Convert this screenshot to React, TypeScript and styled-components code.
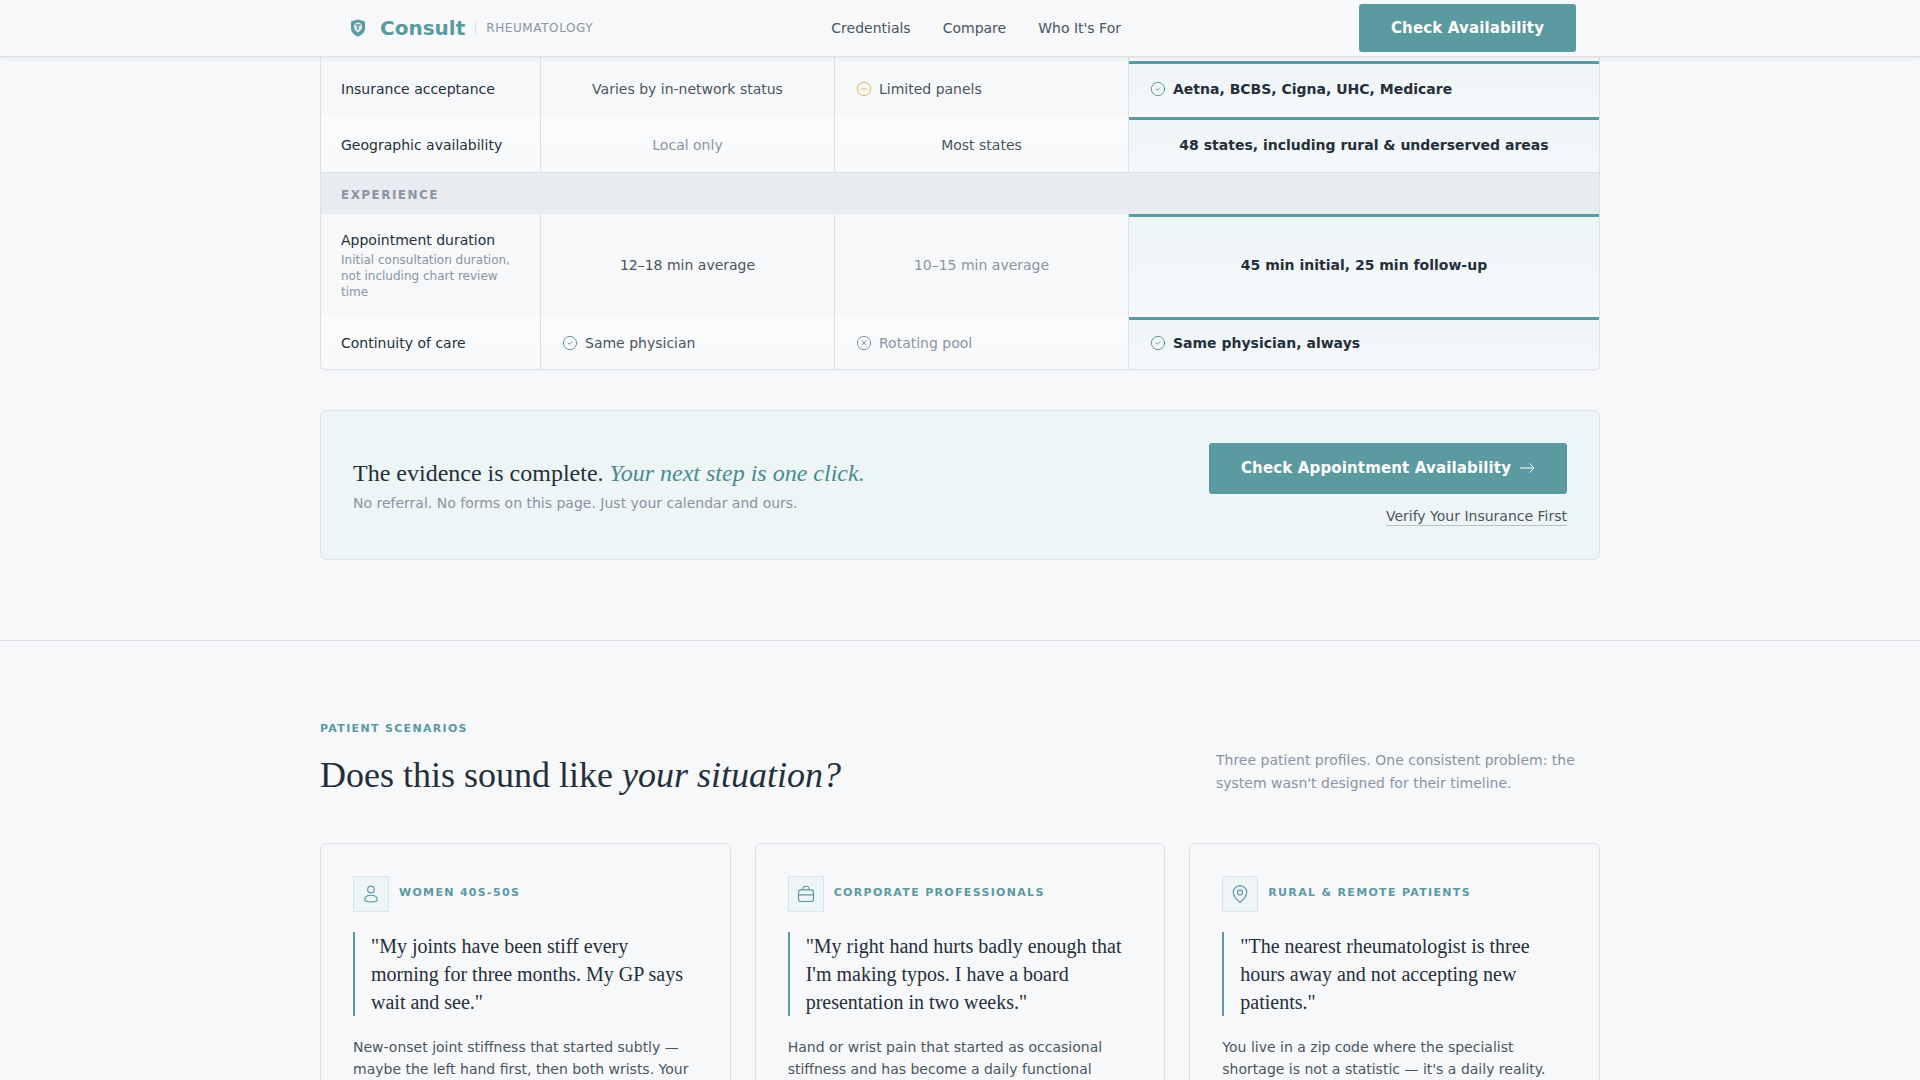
import * as React from 'react';
import styled, { createGlobalStyle } from 'styled-components';
import { CircleCheck, CircleMinus, CircleX, MapPin } from 'lucide-react';

const teal = '#5b9aa0';
const ink = '#252f3a';
const slate = '#4a5560';
const mute = '#8a94a3';
const line = '#dde1e6';
const page = '#f6f8fa';
const sans = '"DejaVu Sans", sans-serif';
const serif = '"Liberation Serif", serif';

const GlobalStyle = createGlobalStyle`
    html, body {
        margin: 0;
        height: 100%;
        overflow: hidden;
        background: ${page};
        font-family: ${sans};
        color: ${ink};
    }
`;

const Page = styled.div`
    height: 1080px;
    overflow: hidden;
`;

const Nav = styled.header`
    position: relative;
    z-index: 2;
    height: 56px;
    background: ${page};
    border-bottom: 1px solid ${line};
    box-shadow: 0 1px 4px rgba(31, 41, 51, 0.08);
`;

const NavInner = styled.div`
    width: 1280px;
    height: 56px;
    margin: 0 auto;
    padding: 0 24px;
    box-sizing: border-box;
    display: flex;
    align-items: center;
    justify-content: space-between;
`;

const Brand = styled.div`
    display: flex;
    align-items: center;
`;

const BrandName = styled.span`
    margin-left: 8px;
    font-size: 20px;
    font-weight: 700;
    color: ${teal};
`;

const BrandTag = styled.span`
    margin-left: 10px;
    padding-left: 10px;
    border-left: 1px solid ${line};
    font-size: 12px;
    line-height: 16px;
    letter-spacing: 0.6px;
    color: ${mute};
`;

const NavLinks = styled.nav`
    display: flex;
    gap: 32px;
    font-size: 14px;
    color: ${slate};
`;

const Button = styled.a<{ $wide?: boolean }>`
    display: flex;
    align-items: center;
    justify-content: center;
    gap: 8px;
    box-sizing: border-box;
    width: ${p => (p.$wide ? '358px' : '217px')};
    height: ${p => (p.$wide ? '51px' : '48px')};
    border-radius: 3px;
    background: ${teal};
    color: #ffffff;
    font-size: 15px;
    font-weight: 700;
    letter-spacing: 0.15px;
`;

const Container = styled.div`
    width: 1280px;
    margin: 0 auto;
`;

const Table = styled.div`
    border: 1px solid ${line};
    border-top: none;
    border-radius: 0 0 6px 6px;
    overflow: hidden;
    box-shadow: 0 1px 2px rgba(31, 41, 51, 0.04);
`;

const Row = styled.div<{ $h: number; $alt?: boolean; $rule?: boolean; $lift?: number }>`
    --lift: ${p => p.$lift ?? 0}px;
    display: grid;
    grid-template-columns: 220px 294px 294px 1fr;
    height: ${p => p.$h}px;
    box-sizing: border-box;
    background: ${p => (p.$alt ? 'linear-gradient(180deg, #fafbfc, #f7f9fa)' : page)};
    border-bottom: ${p => (p.$rule ? `1px solid ${line}` : 'none')};
`;

const Cell = styled.div<{ $tone?: 'mute' | 'slate'; $left?: boolean }>`
    display: flex;
    align-items: center;
    justify-content: ${p => (p.$left ? 'flex-start' : 'center')};
    gap: ${p => (p.$left ? '7px' : '8px')};
    padding: 0 20px var(--lift) ${p => (p.$left ? '21px' : '20px')};
    border-right: 1px solid ${line};
    font-size: 14px;
    color: ${p => (p.$tone === 'mute' ? mute : slate)};
`;

const LabelCell = styled(Cell)`
    flex-direction: column;
    align-items: flex-start;
    justify-content: center;
    gap: 0;
    padding-bottom: 0;
    color: ${ink};
`;

const LabelSub = styled.span`
    margin-top: 4px;
    font-size: 12px;
    line-height: 16px;
    color: ${mute};
`;

const Best = styled.div<{ $left?: boolean }>`
    display: flex;
    align-items: center;
    justify-content: ${p => (p.$left ? 'flex-start' : 'center')};
    gap: ${p => (p.$left ? '7px' : '8px')};
    padding: 0 20px calc(3px + var(--lift)) ${p => (p.$left ? '21px' : '20px')};
    border-top: 3px solid ${teal};
    background: linear-gradient(180deg, #edf5f6, ${page});
    font-size: 14px;
    font-weight: 700;
    color: ${ink};
`;

const SectionRow = styled.div`
    display: flex;
    align-items: center;
    height: 41px;
    padding: 2px 20px 0;
    box-sizing: border-box;
    background: #e8ebef;
    font-size: 12px;
    font-weight: 700;
    letter-spacing: 1.44px;
    color: ${mute};
`;

const Cta = styled.div`
    display: flex;
    align-items: center;
    justify-content: space-between;
    box-sizing: border-box;
    height: 150px;
    margin-top: 40px;
    padding: 0 32px;
    border: 1px solid #d7e6e8;
    border-radius: 6px;
    background: #edf5f6;
`;

const CtaTitle = styled.div`
    font-family: ${serif};
    font-size: 24px;
    line-height: 30px;
    color: ${ink};

    em {
        color: #4a8a90;
    }
`;

const CtaSub = styled.div`
    margin: 7px 0 1px;
    font-size: 14px;
    color: ${mute};
`;

const CtaActions = styled.div`
    display: flex;
    flex-direction: column;
    align-items: flex-end;
    gap: 14px;
    margin-bottom: 2px;
`;

const TextLink = styled.a`
    font-size: 14px;
    line-height: 17px;
    color: ${slate};
    border-bottom: 1px solid #b9c2cb;
`;

const Rule = styled.hr`
    margin: 80px 0 0;
    border: none;
    border-top: 1px solid ${line};
`;

const Head = styled.div`
    display: flex;
    align-items: flex-end;
    justify-content: space-between;
    padding-top: 81px;
`;

const Eyebrow = styled.div`
    font-size: 11px;
    line-height: 14px;
    font-weight: 700;
    letter-spacing: 1.32px;
    color: ${teal};
`;

const Title = styled.h2`
    margin: 17px 0 0;
    font-family: ${serif};
    font-size: 36px;
    line-height: 44px;
    font-weight: 400;
    color: ${ink};
`;

const HeadNote = styled.p`
    width: 384px;
    margin: 0 0 2px;
    font-size: 14px;
    line-height: 23px;
    color: ${mute};
`;

const Cards = styled.div`
    display: grid;
    grid-template-columns: repeat(3, 1fr);
    gap: 24px;
    margin-top: 46px;
`;

const Card = styled.article`
    box-sizing: border-box;
    padding: 32px;
    border: 1px solid ${line};
    border-radius: 6px;
    background: #f7f8fa;
`;

const CardHead = styled.div`
    display: flex;
    gap: 10px;
`;

const IconBox = styled.div`
    display: flex;
    align-items: center;
    justify-content: center;
    width: 36px;
    height: 36px;
    box-sizing: border-box;
    border: 1px solid #d7e6e8;
    background: #edf5f6;
    color: ${teal};
`;

const CardTag = styled.div`
    margin-top: 10px;
    font-size: 11px;
    line-height: 14px;
    font-weight: 700;
    letter-spacing: 1.32px;
    color: ${teal};
`;

const Quote = styled.blockquote`
    margin: 20px 0 0;
    padding-left: 16px;
    border-left: 2px solid ${teal};
    font-family: ${serif};
    font-size: 20px;
    line-height: 28px;
    color: ${ink};
`;

const CardBody = styled.p`
    margin: 20px 0 0;
    font-size: 14px;
    line-height: 22px;
    color: ${slate};
`;

const Shield = () => (
    <svg width="28" height="20" viewBox="0 0 28 20">
        <path d="M14 1.5l7 2v6.5c0 4.2-3 7-7 8.500-4-1.500-7-4.300-7-8.500V3.500z" fill={teal} />
        <path d="M14 4.500c2.400 0 4.200 1.700 4.200 4 0 2.800-2 4.800-4.200 6-2.200-1.200-4.200-3.200-4.200-6 0-2.300 1.800-4 4.200-4z" fill="#dcebec" />
        <path d="M11.500 7h5M14 7v5" stroke={teal} strokeWidth="1.400" fill="none" />
    </svg>
);

const UserIcon = () => (
    <svg width="20" height="20" viewBox="0 0 24 24" fill="none" stroke="currentColor" strokeWidth="1.4">
        <circle cx="12" cy="6.500" r="4" />
        <path d="M4.500 19c0-3.500 3.400-5.500 7.500-5.500s7.500 2 7.500 5.500c0 1.500-3 2.500-7.500 2.500s-7.500-1-7.500-2.500z" />
    </svg>
);

const CaseIcon = () => (
    <svg width="20" height="20" viewBox="0 0 24 24" fill="none" stroke="currentColor" strokeWidth="1.4">
        <rect x="3" y="7" width="18" height="14" rx="3" />
        <path d="M8.500 7V5a2 2 0 0 1 2-2h3a2 2 0 0 1 2 2v2M3 13h18" />
    </svg>
);

const Arrow = () => (
    <svg width="16" height="16" viewBox="0 0 16 16" fill="none" stroke="currentColor" strokeWidth="1">
        <path d="M1 8h14M10.500 3.500L15 8l-4.500 4.500" />
    </svg>
);

const Check = () => <CircleCheck size={16} strokeWidth={1.5} color={teal} />;

const scenarios = [
    {
        icon: <UserIcon />,
        tag: 'WOMEN 40S-50S',
        quote: '"My joints have been stiff every morning for three months. My GP says wait and see."',
        body: 'New-onset joint stiffness that started subtly — maybe the left hand first, then both wrists. Your',
    },
    {
        icon: <CaseIcon />,
        tag: 'CORPORATE PROFESSIONALS',
        quote: '"My right hand hurts badly enough that I\'m making typos. I have a board presentation in two weeks."',
        body: 'Hand or wrist pain that started as occasional stiffness and has become a daily functional',
    },
    {
        icon: <MapPin size={20} strokeWidth={1.4} />,
        tag: 'RURAL & REMOTE PATIENTS',
        quote: '"The nearest rheumatologist is three hours away and not accepting new patients."',
        body: "You live in a zip code where the specialist shortage is not a statistic — it's a daily reality.",
    },
];

const App = () => {
    return (
        <Page>
            <GlobalStyle />
            <Nav>
                <NavInner>
                    <Brand>
                        <Shield />
                        <BrandName>Consult</BrandName>
                        <BrandTag>RHEUMATOLOGY</BrandTag>
                    </Brand>
                    <NavLinks>
                        <span>Credentials</span>
                        <span>Compare</span>
                        <span>Who It's For</span>
                    </NavLinks>
                    <Button>Check Availability</Button>
                </NavInner>
            </Nav>

            <Container>
                <Table>
                    <Row $h={4}>
                        <Cell />
                        <Cell />
                        <Cell />
                        <div />
                    </Row>
                    <Row $h={56}>
                        <LabelCell>Insurance acceptance</LabelCell>
                        <Cell>Varies by in-network status</Cell>
                        <Cell $left>
                            <CircleMinus size={16} strokeWidth={1.5} color="#e8b94a" />
                            Limited panels
                        </Cell>
                        <Best $left>
                            <Check />
                            Aetna, BCBS, Cigna, UHC, Medicare
                        </Best>
                    </Row>
                    <Row $h={56} $alt $rule>
                        <LabelCell>Geographic availability</LabelCell>
                        <Cell $tone="mute">Local only</Cell>
                        <Cell>Most states</Cell>
                        <Best>48 states, including rural &amp; underserved areas</Best>
                    </Row>
                    <SectionRow>EXPERIENCE</SectionRow>
                    <Row $h={103} $lift={2}>
                        <LabelCell>
                            Appointment duration
                            <LabelSub>Initial consultation duration, not including chart review time</LabelSub>
                        </LabelCell>
                        <Cell>12–18 min average</Cell>
                        <Cell $tone="mute">10–15 min average</Cell>
                        <Best>45 min initial, 25 min follow-up</Best>
                    </Row>
                    <Row $h={52} $alt>
                        <LabelCell>Continuity of care</LabelCell>
                        <Cell $left>
                            <Check />
                            Same physician
                        </Cell>
                        <Cell $left $tone="mute">
                            <CircleX size={16} strokeWidth={1.5} color={mute} />
                            Rotating pool
                        </Cell>
                        <Best $left>
                            <Check />
                            Same physician, always
                        </Best>
                    </Row>
                </Table>

                <Cta>
                    <div>
                        <CtaTitle>
                            The evidence is complete. <em>Your next step is one click.</em>
                        </CtaTitle>
                        <CtaSub>No referral. No forms on this page. Just your calendar and ours.</CtaSub>
                    </div>
                    <CtaActions>
                        <Button $wide>
                            Check Appointment Availability
                            <Arrow />
                        </Button>
                        <TextLink>Verify Your Insurance First</TextLink>
                    </CtaActions>
                </Cta>
            </Container>

            <Rule />

            <Container>
                <Head>
                    <div>
                        <Eyebrow>PATIENT SCENARIOS</Eyebrow>
                        <Title>
                            Does this sound like <em>your situation?</em>
                        </Title>
                    </div>
                    <HeadNote>
                        Three patient profiles. One consistent problem: the system wasn't designed for their timeline.
                    </HeadNote>
                </Head>

                <Cards>
                    {scenarios.map(s => (
                        <Card key={s.tag}>
                            <CardHead>
                                <IconBox>{s.icon}</IconBox>
                                <CardTag>{s.tag}</CardTag>
                            </CardHead>
                            <Quote>{s.quote}</Quote>
                            <CardBody>{s.body}</CardBody>
                        </Card>
                    ))}
                </Cards>
            </Container>
        </Page>
    );
};

export default App;
